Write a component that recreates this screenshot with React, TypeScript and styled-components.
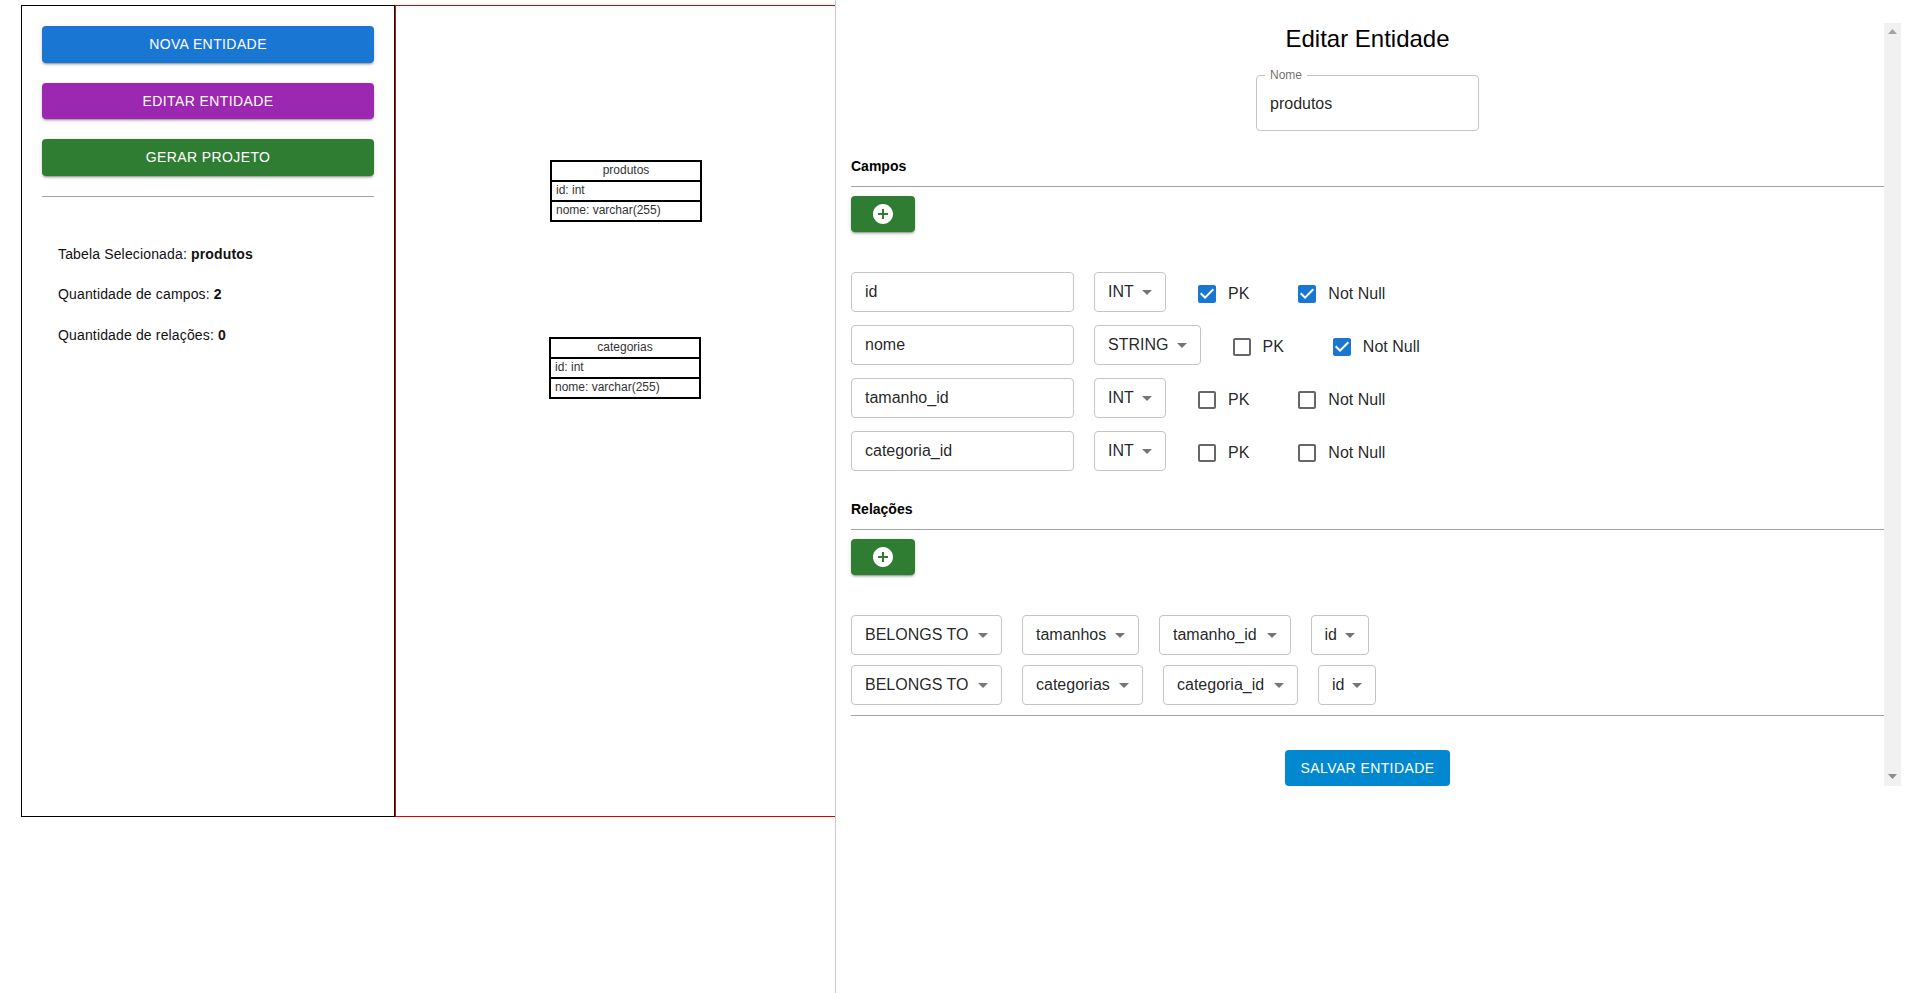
import React from "react";
import styled, { createGlobalStyle } from "styled-components";

const FONT = `"Liberation Sans", Arial, sans-serif`;

const Global = createGlobalStyle`
  html, body { margin: 0; padding: 0; background: #fff; }
  body { font-family: ${FONT}; color: rgba(0,0,0,.87); overflow: hidden; }
  * { box-sizing: border-box; }
`;

const Page = styled.div`
  display: flex;
  height: 993px;
  padding: 5px 0 0 21px;
  align-items: flex-start;
`;
const Sidebar = styled.aside`
  width: 374px;
  height: 812px;
  border: 1px solid #000;
  padding: 20px;
  flex: none;
`;
const ActionList = styled.div`
  display: flex;
  flex-direction: column;
  gap: 20px;
`;
const ActionButton = styled.button<{ $bg: string }>`
  height: 36.5px;
  width: 100%;
  border: 0;
  border-radius: 4px;
  background: ${(p) => p.$bg};
  color: #fff;
  font: 400 14px/1 ${FONT};
  letter-spacing: 0.4px;
  text-transform: uppercase;
  box-shadow: 0 3px 1px -2px rgba(0,0,0,.2), 0 2px 2px 0 rgba(0,0,0,.14), 0 1px 5px 0 rgba(0,0,0,.12);
`;
const Rule = styled.hr<{ $mt: number; $mb: number }>`
  border: 0;
  height: 1px;
  background: #a3a3a3;
  margin: ${(p) => p.$mt}px 0 ${(p) => p.$mb}px;
`;
const Stats = styled.div`
  display: flex;
  flex-direction: column;
  gap: 20.5px;
  padding: 0 16px;
  font-size: 14px;
  line-height: 20px;
  letter-spacing: 0.15px;
  color: #111;
`;
const Canvas = styled.main`
  position: relative;
  flex: 1;
  height: 812px;
  border: 1px solid #e00000;
`;
const TableNode = styled.div<{ $x: number; $y: number }>`
  position: absolute;
  left: ${(p) => p.$x}px;
  top: ${(p) => p.$y}px;
  width: 152px;
  border: 2px solid #000;
  font-size: 12px;
  color: #333;
`;
const NodeHead = styled.div`
  height: 18px;
  line-height: 17px;
  text-align: center;
`;
const NodeRow = styled.div`
  height: 20px;
  line-height: 17px;
  padding: 0 4px;
  border-top: 2px solid #000;
`;
const Drawer = styled.section`
  position: fixed;
  top: 0;
  right: 0;
  bottom: 0;
  width: 1077px;
  background: #fff;
  border-left: 1px solid #ccc;
  padding: 23px 11px 0 15px;
`;
const Scroller = styled.div`
  display: flex;
  height: 763px;
`;
const Form = styled.div`
  flex: 1;
  display: flex;
  flex-direction: column;
`;
const ScrollTrack = styled.div`
  width: 17px;
  flex: none;
  background: #f1f1f1;
  display: flex;
  flex-direction: column;
  align-items: center;
  justify-content: space-between;
  padding: 6px 0 7px;
`;
const Title = styled.h2`
  margin: 0 0 20px;
  font-weight: 400;
  font-size: 24px;
  line-height: 32px;
  text-align: center;
  color: #000;
`;
const NameField = styled.div`
  position: relative;
  align-self: center;
  width: 223px;
  height: 56px;
  border: 1px solid #c4c4c4;
  border-radius: 4px;
  padding: 2px 13px 0;
  display: flex;
  align-items: center;
  font-size: 16px;
`;
const FloatLabel = styled.span`
  position: absolute;
  top: -8px;
  left: 8px;
  padding: 0 5px;
  background: #fff;
  font-size: 12px;
  line-height: 15px;
  color: rgba(0,0,0,.6);
`;
const SectionLabel = styled.h3<{ $mt: number }>`
  margin: ${(p) => p.$mt}px 0 10px;
  font-size: 14px;
  line-height: 20px;
  font-weight: 700;
  color: #000;
`;
const AddButton = styled.button`
  align-self: flex-start;
  width: 64px;
  height: 36.5px;
  margin: 9px 0 39.5px;
  border: 0;
  border-radius: 4px;
  padding: 0;
  background: #2e7d32;
  display: flex;
  align-items: center;
  justify-content: center;
  box-shadow: 0 3px 1px -2px rgba(0,0,0,.2), 0 2px 2px 0 rgba(0,0,0,.14), 0 1px 5px 0 rgba(0,0,0,.12);
`;
const FieldList = styled.div<{ $gap: number }>`
  display: flex;
  flex-direction: column;
  gap: ${(p) => p.$gap}px;
`;
const FieldRow = styled.div`
  display: flex;
  align-items: flex-start;
  gap: 20px;
`;
const TextBox = styled.div`
  width: 223px;
  height: 40px;
  border: 1px solid #c4c4c4;
  border-radius: 4px;
  padding: 1px 13px 0;
  display: flex;
  align-items: center;
  font-size: 16px;
`;
const SelectBox = styled.div<{ $w: number }>`
  width: ${(p) => p.$w}px;
  height: 40px;
  border: 1px solid #c4c4c4;
  border-radius: 4px;
  padding: 1px 6px 0 13px;
  display: flex;
  align-items: center;
  font-size: 16px;
  flex: none;
`;
const Caret = styled.svg`
  width: 24px;
  height: 24px;
  margin: 0 0 1px auto;
  fill: rgba(0,0,0,.54);
`;
const CheckLabel = styled.label<{ $ml: number }>`
  display: flex;
  align-items: center;
  height: 40px;
  padding-top: 4px;
  margin-left: ${(p) => p.$ml}px;
  font-size: 16px;
  gap: 9px;
  flex: none;
`;
const CheckIcon = styled.svg<{ $on: boolean }>`
  width: 24px;
  height: 24px;
  margin-left: -3px;
  fill: ${(p) => (p.$on ? "#1976d2" : "rgba(0,0,0,.6)")};
`;
const SaveButton = styled.button`
  align-self: center;
  width: 165px;
  height: 36.5px;
  margin-top: 34px;
  border: 0;
  border-radius: 4px;
  background: #0288d1;
  color: #fff;
  font: 400 14px/1 ${FONT};
  letter-spacing: 0.4px;
  text-transform: uppercase;
`;

const Check = ({ on, label, ml }: { on: boolean; label: string; ml: number }) => (
  <CheckLabel $ml={ml}>
    <CheckIcon $on={on} viewBox="0 0 24 24">
      <path
        d={
          on
            ? "M19 3H5c-1.11 0-2 .9-2 2v14c0 1.1.89 2 2 2h14c1.11 0 2-.9 2-2V5c0-1.1-.89-2-2-2zm-9 14l-5-5 1.41-1.41L10 14.17l7.59-7.59L19 8l-9 9z"
            : "M19 5v14H5V5h14m0-2H5c-1.1 0-2 .9-2 2v14c0 1.1.9 2 2 2h14c1.1 0 2-.9 2-2V5c0-1.1-.9-2-2-2z"
        }
      />
    </CheckIcon>
    {label}
  </CheckLabel>
);

const Select = ({ value, w }: { value: string; w: number }) => (
  <SelectBox $w={w}>
    {value}
    <Caret viewBox="0 0 24 24">
      <path d="M7 10l5 5 5-5z" />
    </Caret>
  </SelectBox>
);

const Add = () => (
  <AddButton>
    <svg width="24" height="24" viewBox="0 0 24 24" fill="#fff">
      <path d="M12 2C6.48 2 2 6.48 2 12s4.48 10 10 10 10-4.48 10-10S17.52 2 12 2zm5 11h-4v4h-2v-4H7v-2h4V7h2v4h4v2z" />
    </svg>
  </AddButton>
);

const fields = [
  { name: "id", type: "INT", w: 72, pk: true, nn: true },
  { name: "nome", type: "STRING", w: 106.5, pk: false, nn: true },
  { name: "tamanho_id", type: "INT", w: 72, pk: false, nn: false },
  { name: "categoria_id", type: "INT", w: 72, pk: false, nn: false },
];
const relations = [
  [
    { v: "BELONGS TO", w: 151 },
    { v: "tamanhos", w: 117 },
    { v: "tamanho_id", w: 131.5 },
    { v: "id", w: 58 },
  ],
  [
    { v: "BELONGS TO", w: 151 },
    { v: "categorias", w: 121 },
    { v: "categoria_id", w: 135 },
    { v: "id", w: 58 },
  ],
];
const nodes = [
  { name: "produtos", x: 154, y: 154 },
  { name: "categorias", x: 153, y: 331 },
];

export default function App() {
  return (
    <>
      <Global />
      <Page>
        <Sidebar>
          <ActionList>
            <ActionButton $bg="#1976d2">Nova Entidade</ActionButton>
            <ActionButton $bg="#9c27b0">Editar Entidade</ActionButton>
            <ActionButton $bg="#2e7d32">Gerar Projeto</ActionButton>
          </ActionList>
          <Rule $mt={20} $mb={47} />
          <Stats>
            <div>Tabela Selecionada: <b>produtos</b></div>
            <div>Quantidade de campos: <b>2</b></div>
            <div>Quantidade de relações: <b>0</b></div>
          </Stats>
        </Sidebar>
        <Canvas>
          {nodes.map((n) => (
            <TableNode key={n.name} $x={n.x} $y={n.y}>
              <NodeHead>{n.name}</NodeHead>
              <NodeRow>id: int</NodeRow>
              <NodeRow>nome: varchar(255)</NodeRow>
            </TableNode>
          ))}
        </Canvas>
      </Page>
      <Drawer>
        <Scroller>
          <Form>
            <Title>Editar Entidade</Title>
            <NameField>
              <FloatLabel>Nome</FloatLabel>
              produtos
            </NameField>
            <SectionLabel $mt={25}>Campos</SectionLabel>
            <Rule $mt={0} $mb={0} />
            <Add />
            <FieldList $gap={13}>
              {fields.map((f) => (
                <FieldRow key={f.name}>
                  <TextBox>{f.name}</TextBox>
                  <Select value={f.type} w={f.w} />
                  <Check on={f.pk} label="PK" ml={12} />
                  <Check on={f.nn} label="Not Null" ml={29} />
                </FieldRow>
              ))}
            </FieldList>
            <SectionLabel $mt={28}>Relações</SectionLabel>
            <Rule $mt={0} $mb={0} />
            <Add />
            <FieldList $gap={10}>
              {relations.map((r) => (
                <FieldRow key={r[1].v}>
                  {r.map((c, i) => (
                    <Select key={i} value={c.v} w={c.w} />
                  ))}
                </FieldRow>
              ))}
            </FieldList>
            <Rule $mt={10} $mb={0} />
            <SaveButton>Salvar Entidade</SaveButton>
          </Form>
          <ScrollTrack>
            <svg width="9" height="5" viewBox="0 0 9 5" fill="#a3a3a3"><path d="M4.5 0L9 5H0z" /></svg>
            <svg width="9" height="5" viewBox="0 0 9 5" fill="#8a8a8a"><path d="M0 0h9L4.5 5z" /></svg>
          </ScrollTrack>
        </Scroller>
      </Drawer>
    </>
  );
}
